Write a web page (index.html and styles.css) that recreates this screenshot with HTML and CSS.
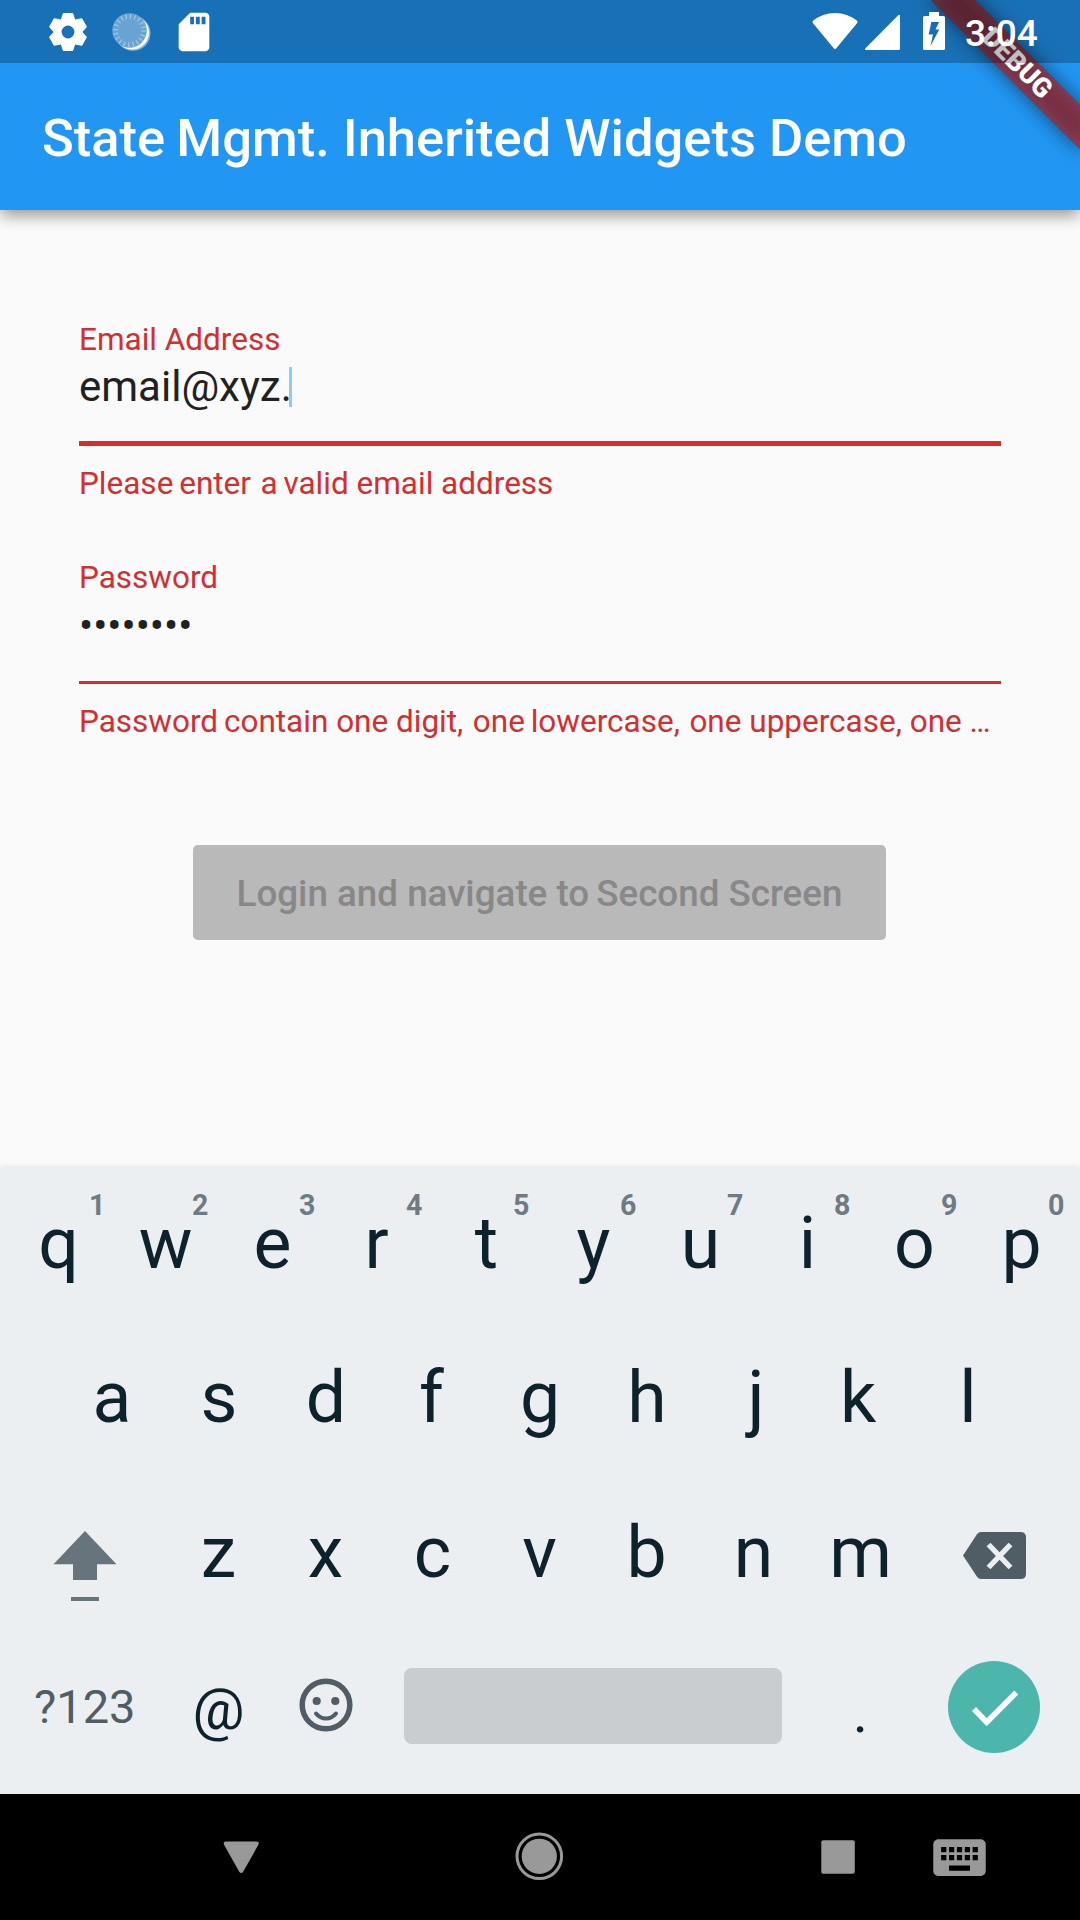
FILE: index.html
```html
<!DOCTYPE html>
<html lang="en">
<head>
<meta charset="utf-8">
<title>State Mgmt. Inherited Widgets Demo</title>
<link rel="stylesheet" href="styles.css">
</head>
<body>
<div class="screen">
  <header class="app-bar"><h1 class="app-title">State<span class="thin"> </span>Mgmt. Inherited Widgets Demo</h1></header>

  <main class="form">
    <div class="field">
      <label class="label">Email Address</label>
      <div class="input">email@xyz.<span class="caret"></span></div>
      <div class="line line-focused"></div>
      <p class="error">Please<span class="thin"> </span>enter<span class="wide"> </span>a<span class="thin"> </span>valid email address</p>
    </div>
    <div class="field">
      <label class="label">Password</label>
      <div class="input input-masked">••••••••</div>
      <div class="line"></div>
      <p class="error">Password<span class="thin"> </span>contain one digit,<span class="wide"> </span>one<span class="thin"> </span>lowercase,<span class="wide"> </span>one uppercase, one …</p>
    </div>
    <button class="login" type="button" disabled>Login and navigate to<span class="thin"> </span>Second Screen</button>
  </main>

  <section class="keyboard">
    <div class="row row-first">
      <span class="key">q<sup class="hint hint-one">1</sup></span><span class="key">w<sup class="hint">2</sup></span><span class="key">e<sup class="hint">3</sup></span><span class="key"><span class="glyph-left">r</span><sup class="hint">4</sup></span><span class="key">t<sup class="hint">5</sup></span><span class="key">y<sup class="hint">6</sup></span><span class="key">u<sup class="hint">7</sup></span><span class="key">i<sup class="hint">8</sup></span><span class="key">o<sup class="hint">9</sup></span><span class="key">p<sup class="hint">0</sup></span>
    </div>
    <div class="row">
      <span class="key">a</span><span class="key">s</span><span class="key">d</span><span class="key"><span class="glyph-slight">f</span></span><span class="key">g</span><span class="key">h</span><span class="key"><span class="glyph-right">j</span></span><span class="key"><span class="glyph-left">k</span></span><span class="key">l</span>
    </div>
    <div class="row row-lower">
      <span class="key key-side"><svg class="icon-shift" width="64" height="70" viewBox="0 0 64 70"><path fill="#67747b" d="M32 0 63.5 33.3H44V49H20V33.3H.5zM18 66h28v4H18z"/></svg></span>
      <span class="key">z</span><span class="key">x</span><span class="key">c</span><span class="key">v</span><span class="key">b</span><span class="key">n</span><span class="key">m</span>
      <span class="key key-side"><svg class="icon-delete" width="63" height="47" viewBox="0 0 63 47"><path fill="#505d65" d="M18 0H57.500Q63 0 63 5.500V41.500Q63 47 57.500 47H18Q15.500 47 14 44.800L0 23.500 14 2.200Q15.500 0 18 0z"/><path stroke="#ebeff2" stroke-width="5.400" d="M25.500 12.500 47.500 35.500M47.500 12.500 25.500 35.500"/></svg></span>
    </div>
    <div class="row row-lower">
      <span class="key key-side key-symbols">?123</span>
      <span class="key key-small">@</span>
      <span class="key"><svg class="icon-smile" width="54" height="54" viewBox="-27 -27 54 54"><circle r="23.800" fill="none" stroke="#505d65" stroke-width="5.500"/><circle cx="-9.300" cy="-4" r="4.100" fill="#505d65"/><circle cx="9.300" cy="-4" r="4.100" fill="#505d65"/><path d="M-10 8.500Q-6 13.500 0 13.500T10 8.500" fill="none" stroke="#505d65" stroke-width="4" stroke-linecap="round"/></svg></span>
      <span class="space-slot"><span class="space-bar"></span></span>
      <span class="key key-small key-dot">.</span>
      <span class="key key-side"><svg class="icon-done" width="92" height="92" viewBox="-46 -46 92 92"><circle r="46" fill="#4db6ac"/><path d="M-20 2-7.300 15.200 22.300-14.500" fill="none" stroke="#fff" stroke-width="5.600"/></svg></span>
    </div>
  </section>

  <nav class="nav-bar">
    <svg width="1080" height="126" viewBox="0 1794 1080 126">
      <g fill="#999">
        <path d="M226 1841.500H256.500Q260 1841.500 258.200 1845L243.300 1871.500Q241.200 1874.500 239.100 1871.500L224.200 1845Q222.500 1841.500 226 1841.500z"/>
        <circle cx="539.300" cy="1856.300" r="17.600"/>
        <circle cx="539.300" cy="1856.300" r="22.300" fill="none" stroke="#999" stroke-width="3"/>
        <rect x="821.300" y="1840.300" width="33.500" height="33.500" rx="2"/>
        <path transform="translate(928 1826) scale(2.625)" d="M20 5H4c-1.100 0-1.990.9-1.990 2L2 17c0 1.100.9 2 2 2h16c1.100 0 2-.9 2-2V7c0-1.100-.9-2-2-2zm-9 3h2v2h-2V8zm0 3h2v2h-2v-2zM8 8h2v2H8V8zm0 3h2v2H8v-2zm-1 2H5v-2h2v2zm0-3H5V8h2v2zm9 7H8v-2h8v2zm0-4h-2v-2h2v2zm0-3h-2V8h2v2zm3 3h-2v-2h2v2zm0-3h-2V8h2v2z"/>
      </g>
    </svg>
  </nav>

  <div class="banner-clip"><div class="banner-shadow"></div><div class="banner">DEBUG</div></div>

  <div class="status-bar">
    <svg class="status-icon icon-gear" width="46" height="46" viewBox="-23 -23 46 46">
      <defs><path id="tooth" d="M-7-11-4.600-18.400H4.600L7-11z"/></defs>
      <circle r="10.200" fill="none" stroke="#fff" stroke-width="7.600"/>
      <g fill="#fff" stroke="#fff" stroke-width="1.200" stroke-linejoin="round">
        <use href="#tooth"/><use href="#tooth" transform="rotate(60)"/><use href="#tooth" transform="rotate(120)"/><use href="#tooth" transform="rotate(180)"/><use href="#tooth" transform="rotate(240)"/><use href="#tooth" transform="rotate(300)"/>
      </g>
    </svg>
    <svg class="status-icon icon-sync" width="42" height="42" viewBox="0 0 42 42"><circle cx="23" cy="22.300" r="17.500" fill="#85b4da"/><circle cx="22" cy="21.500" r="17" fill="#fff"/><circle cx="19.500" cy="19.500" r="17.300" fill="#69a3d2"/><circle cx="19.500" cy="19.500" r="14" fill="none" stroke="#a3c7e4" stroke-width="5" stroke-dasharray="1.200 3.198"/></svg>
    <svg class="status-icon icon-sd" width="46" height="46" viewBox="0 0 24 24"><path fill="#fff" d="M18 2h-8L4.020 8 4 20c0 1.100.9 2 2 2h12c1.100 0 2-.9 2-2V4c0-1.100-.9-2-2-2zm-6 6h-2V4h2v4zm3 0h-2V4h2v4zm3 0h-2V4h2v4z"/></svg>
    <svg class="status-right" width="136" height="63" viewBox="811 0 136 63"><g fill="#fff">
      <path d="M813 20.800C819 16 827 13 835 13S851 16 857 20.800Q858 21.800 857.200 22.900L836.500 48Q835 49.800 833.500 48L812.800 22.900Q812 21.800 813 20.800z"/>
      <path d="M898.200 15.300Q900 13.900 900 16.500V48.500Q900 50 898.500 50H866.500Q864 50 865.500 48.200z"/>
      <path fill-rule="evenodd" d="M929 12h10v4h4.500q1.500 0 1.500 1.500V48.500q0 1.500-1.500 1.500H924.500q-1.500 0-1.500-1.500V17.500q0-1.500 1.500-1.500H929zM931.300 22 928.700 34.500H933L930.500 46 939.300 29.500H935.500L939 22z"/>
    </g></svg>
    <span class="clock">3:04</span>
  </div>
</div>
</body>
</html>
```
FILE: styles.css
```css
* { box-sizing: border-box; }

body {
  margin: 0;
  font-family: Roboto, "Noto Sans", sans-serif;
}

.screen {
  position: relative;
  display: flex;
  flex-direction: column;
  width: 1080px;
  height: 1920px;
  overflow: hidden;
  background: #fafafa;
}

/* App bar */
.app-bar {
  display: flex;
  align-items: center;
  flex: none;
  height: 210px;
  padding: 65px 42px 0;
  background: #2196f3;
  box-shadow: 0 7px 14px -1px rgba(0, 0, 0, .38);
}

.app-title {
  margin: 0;
  color: #fff;
  font-size: 52.5px;
  font-weight: 500;
  line-height: 62px;
  white-space: nowrap;
}

/* Form */
.form {
  display: flex;
  flex-direction: column;
  flex: 1;
  padding: 111px 79px 0;
}

.field { height: 238px; }

.label {
  display: block;
  color: #d32f2f;
  font-size: 31.5px;
  line-height: 38px;
}

.input {
  display: flex;
  align-items: center;
  height: 50px;
  margin: 3px 0 29px;
  color: #212121;
  font-size: 42px;
  line-height: 50px;
}

.input-masked { padding-top: 1px; }

.caret {
  width: 3px;
  height: 40px;
  margin-left: -3px;
  background: #90caf9;
}

.line {
  height: 3px;
  margin: 31px 0 19px;
  background: #d32f2f;
}

.line-focused {
  height: 5px;
  margin-top: 29px;
}

.error {
  margin: 0;
  color: #d32f2f;
  font-size: 31.5px;
  line-height: 38px;
  white-space: nowrap;
}

.thin { letter-spacing: -2px; }
.wide { letter-spacing: 1.7px; }

.login {
  align-self: center;
  width: 693px;
  height: 95px;
  margin-top: 48px;
  margin-right: 1px;
  padding: 2px 0 0;
  border: 0;
  border-radius: 5px;
  background: #b9b9b9;
  color: #888;
  font: 500 36.75px/44px Roboto, sans-serif;
  white-space: nowrap;
}

/* Soft keyboard */
.keyboard {
  flex: none;
  height: 626px;
  background: #ebeff2;
  color: #0d222b;
  box-shadow: 0 -1px 6px rgba(0, 0, 0, .1);
}

.row {
  display: flex;
  justify-content: center;
  height: 154.5px;
}

.row-first { height: 152.5px; }

.row-lower {
  padding: 1px 1px 0 0;
}

.key {
  position: relative;
  display: flex;
  align-items: center;
  justify-content: center;
  width: 107px;
  font-size: 71.5px;
  line-height: 84px;
}

.key-side { width: 160.5px; }

.glyph-left { margin-right: 6px; }
.glyph-slight { margin-right: 3px; }
.glyph-right { margin-left: 4px; }

.hint {
  position: absolute;
  top: 20px;
  left: 80px;
  color: #6f7b82;
  font-size: 28.6px;
  font-weight: 700;
  line-height: 34px;
}

.hint-one { left: 84px; }

.key-symbols {
  color: #505d65;
  font-size: 47px;
}

.key-small {
  padding-top: 3px;
  font-size: 58px;
}

.key-dot { padding-top: 9px; }

.icon-shift { margin-top: 27px; }
.icon-delete { margin: 5px 0 0 1px; }
.icon-smile { margin-bottom: 4px; }

.space-slot {
  display: flex;
  align-items: center;
  justify-content: center;
  width: 428px;
  padding-bottom: 2px;
}

.space-bar {
  width: 378px;
  height: 76px;
  border-radius: 8px;
  background: #c9cdd0;
}

/* Navigation bar */
.nav-bar {
  flex: none;
  height: 126px;
  background: #000;
}

.nav-bar svg { display: block; }

/* Corner ribbon, drawn over the app bar */
.banner-clip {
  position: absolute;
  top: 0;
  right: 0;
  width: 210px;
  height: 209px;
  overflow: hidden;
}

.banner, .banner-shadow {
  position: absolute;
  top: 73.5px;
  left: 105px;
  width: 210px;
  height: 31.5px;
  transform: rotate(45deg);
  transform-origin: 105px -73.5px;
}

.banner-shadow {
  background: rgba(0, 0, 0, .5);
  filter: blur(10px);
}

.banner {
  background: rgba(183, 28, 28, .63);
  color: #fff;
  font-size: 27px;
  font-weight: 900;
  line-height: 31px;
  text-align: center;
}

/* Translucent system bar over everything */
.status-bar {
  position: absolute;
  top: 0;
  left: 0;
  display: flex;
  align-items: center;
  width: 1080px;
  height: 63px;
  padding-left: 45px;
  background: rgba(0, 0, 0, .25);
}

.icon-sync { margin-left: 19px; }
.icon-sd { margin-left: 19px; }
.status-right { margin-left: 594px; }

.clock {
  margin-left: 18px;
  padding-top: 4px;
  color: #fff;
  font-size: 37px;
  font-weight: 500;
  line-height: 44px;
}
```
